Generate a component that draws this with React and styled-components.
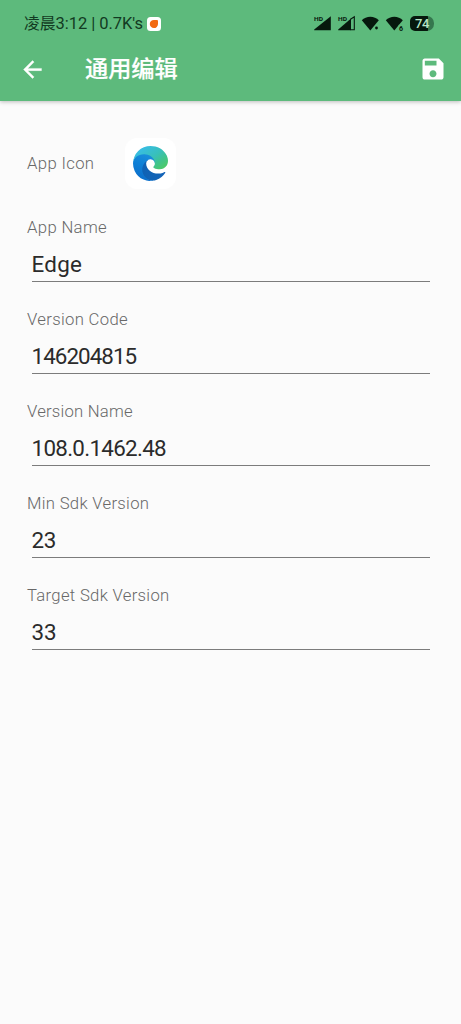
import React from 'react';
import styled, { createGlobalStyle } from 'styled-components';

const fields = [
  { label: 'App Name', value: 'Edge', labelGap: 0.35, gap: 0.25 },
  { label: 'Version Code', value: '146204815', labelGap: 0.32, gap: -0.95 },
  { label: 'Version Name', value: '108.0.1462.48', labelGap: 0.22, gap: -0.7 },
  { label: 'Min Sdk Version', value: '23', labelGap: 0.3, gap: -0.4 },
  { label: 'Target Sdk Version', value: '33', labelGap: 0.3, gap: -0.1 },
];

const StatusIcons = () => (
  <svg width="120" height="20" viewBox="0 0 120 20">
    <g fill="#06180d">
      <path d="M16.8 2.3V16.3H0.2V15.4Z" />
      <path d="M24.2 16.3V15.4L37 4.4V16.3Z" />
      <path d="M36.5 5.2L40.3 2.8V15.8H36.5" fill="none" stroke="#06180d" strokeWidth="1.1" />
      <path d="M47.8 6.3C52 1.6 60.6 1.6 64.8 6.3L56.3 16.5Z" />
      <path d="M71.8 6.3C76 1.6 84.6 1.6 88.8 6.3L80.3 16.5Z" />
    </g>
    <circle cx="62.5" cy="14" r="2.6" fill="#5dba7c" />
    <circle cx="62.5" cy="14" r="1.4" fill="#06180d" />
    <path d="M0 1.6H9.4V7.2H0ZM24 1.6H33.4V7.2H24Z" fill="#5dba7c" />
    <rect x="84.6" y="10.8" width="5" height="7" fill="#5dba7c" />
    <g fill="#06180d" fontFamily="Roboto, sans-serif" fontWeight="700">
      <text x="0" y="6.8" fontSize="5.8" textLength="9" lengthAdjust="spacingAndGlyphs">HD</text>
      <text x="24" y="6.8" fontSize="5.8" textLength="9" lengthAdjust="spacingAndGlyphs">HD</text>
      <text x="85" y="17.3" fontSize="7">6</text>
    </g>
  </svg>
);

const EdgeLogo = () => (
  <svg width="35" height="35" viewBox="0 0 256 256">
    <defs>
      <linearGradient id="deep" x1="63" y1="178" x2="242" y2="178" gradientUnits="userSpaceOnUse">
        <stop offset="0" stopColor="#0f62b4" />
        <stop offset="1" stopColor="#1464b8" />
      </linearGradient>
      <linearGradient id="mid" x1="125" y1="60" x2="60" y2="240" gradientUnits="userSpaceOnUse">
        <stop offset="0" stopColor="#1b90dc" />
        <stop offset="0.5" stopColor="#0f80d6" />
        <stop offset="1" stopColor="#0c70cc" />
      </linearGradient>
      <linearGradient id="top" x1="70" y1="30" x2="190" y2="190" gradientUnits="userSpaceOnUse">
        <stop offset="0" stopColor="#38bde0" />
        <stop offset="0.45" stopColor="#38c0bb" />
        <stop offset="0.75" stopColor="#40c48c" />
        <stop offset="1" stopColor="#4cc96c" />
      </linearGradient>
    </defs>
    <g transform="translate(-4.63 -4.92)">
      <path fill="url(#deep)" d="M235.68 195.5a93.73 93.73 0 0 1-10.54 4.71 101.87 101.87 0 0 1-35.9 6.46c-47.32 0-88.54-32.55-88.54-74.32A31.48 31.48 0 0 1 117.13 105c-42.8 1.8-53.8 46.4-53.8 72.53 0 73.88 68.09 81.37 82.76 81.37 7.91 0 19.84-2.3 27-4.56l1.31-.44a128.34 128.34 0 0 0 66.6-52.8 4 4 0 0 0-5.32-5.6Z" />
      <path fill="url(#mid)" d="M110.34 246.34A79.2 79.2 0 0 1 87.6 225a80.72 80.72 0 0 1 29.53-120c3.12-1.47 8.45-4.13 15.54-4a32.35 32.35 0 0 1 25.69 13 31.88 31.88 0 0 1 6.36 18.66c0-.21 24.46-79.6-80-79.6-43.9 0-80 41.66-80 78.21a130.15 130.15 0 0 0 12.11 56 128 128 0 0 0 156.38 67.11 75.55 75.55 0 0 1-62.78-8Z" />
      <path fill="url(#top)" d="M156.94 153.78c-.81 1.05-3.3 2.5-3.3 5.66 0 2.61 1.7 5.12 4.72 7.23 14.38 10 41.49 8.68 41.56 8.68a59.56 59.56 0 0 0 30.27-8.35 61.38 61.38 0 0 0 30.43-52.88c.26-22.41-8-37.31-11.34-43.91C228.09 28.76 182.35 4.92 132.61 4.92a128 128 0 0 0-128 126.2c.48-36.54 36.8-66.05 80-66.05 3.5 0 23.46.34 42 10.07 16.34 8.58 24.9 18.94 30.85 29.21 6.18 10.67 7.28 24.15 7.28 29.52s-2.74 13.33-7.8 19.91Z" />
    </g>
  </svg>
);

const App = () => {
  return (
    <>
      <GlobalStyle />
      <Screen>
        <Header>
          <StatusBar>
            <Clock>
              凌晨<ClockLatin>3:12 | 0.7K's</ClockLatin>
            </Clock>
            <Notification>
              <svg width="14" height="14" viewBox="0 0 14 14">
                <path d="M7 2.9H10A1 1 0 0 1 11 3.9V7A4.1 4.1 0 1 1 7 2.9Z" fill="#f26a12" />
              </svg>
            </Notification>
            <StatusRight>
              <StatusIcons />
              <Battery>74</Battery>
            </StatusRight>
          </StatusBar>
          <Toolbar>
            <IconButton aria-label="Back">
              <svg width="27" height="27" viewBox="0 0 24 24" fill="#fff" stroke="#fff" strokeWidth="0.3">
                <path d="M20 11H7.83l5.59-5.59L12 4l-8 8 8 8 1.41-1.41L7.83 13H20v-2z" />
              </svg>
            </IconButton>
            <Title>通用编辑</Title>
            <IconButton aria-label="Save">
              <svg width="28" height="28" viewBox="0 0 24 24" fill="#fff">
                <path d="M17 3H5c-1.11 0-2 .9-2 2v14c0 1.1.89 2 2 2h14c1.1 0 2-.9 2-2V7l-4-4zm-5 16c-1.66 0-3-1.34-3-3s1.34-3 3-3 3 1.34 3 3-1.34 3-3 3zm3-10H5V5h10v4z" />
              </svg>
            </IconButton>
          </Toolbar>
        </Header>

        <Form>
          <IconRow>
            <Label $gap={0.35}>App Icon</Label>
            <AppIcon>
              <EdgeLogo />
            </AppIcon>
          </IconRow>
          {fields.map((field) => (
            <Field key={field.label}>
              <Label $gap={field.labelGap}>{field.label}</Label>
              <Input defaultValue={field.value} $gap={field.gap} />
            </Field>
          ))}
        </Form>
      </Screen>
    </>
  );
};

const GlobalStyle = createGlobalStyle`
  * {
    box-sizing: border-box;
  }
  body {
    margin: 0;
    background: #fbfbfb;
    font-family: Roboto, "Noto Sans CJK SC", sans-serif;
  }
  svg {
    display: block;
  }
`;

const Screen = styled.div`
  min-height: 1024px;
  background: #fbfbfb;
`;

const Header = styled.header`
  height: 101px;
  background: #5dba7c;
  box-shadow: 0 1px 4px rgba(0, 0, 0, 0.25);
`;

const StatusBar = styled.div`
  display: flex;
  align-items: center;
  height: 46px;
  padding: 1px 27px 0 24px;
`;

const Clock = styled.div`
  font-size: 15.8px;
  line-height: 20px;
  color: #123a22;
  white-space: nowrap;
`;

const ClockLatin = styled.span`
  font-size: 16.5px;
  letter-spacing: -0.05px;
`;

const Notification = styled.div`
  width: 14px;
  height: 14px;
  margin-left: 3.5px;
  border-radius: 3.5px;
  background: #fff;
`;

const StatusRight = styled.div`
  display: flex;
  align-items: center;
  margin-left: auto;
`;

const Battery = styled.div`
  width: 24px;
  height: 15px;
  margin-left: -24px;
  border-radius: 5px 7px 7px 5px;
  background: linear-gradient(90deg, #06180d 75%, #35774e 75%);
  color: #b9e5c6;
  font-size: 13px;
  font-weight: 500;
  letter-spacing: -0.5px;
  line-height: 16px;
  text-align: center;
`;

const Toolbar = styled.div`
  display: flex;
  align-items: center;
  height: 46px;
  padding: 0 14px 0 19px;
`;

const IconButton = styled.button`
  padding: 0;
  border: none;
  background: none;
  cursor: pointer;
`;

const Title = styled.h1`
  flex: 1;
  margin: 0 0 0 39px;
  font-size: 23.2px;
  font-weight: 500;
  line-height: 30px;
  color: #fff;
  -webkit-text-stroke: 0.2px #fff;
`;

const Form = styled.main`
  padding: 37px 27px 0;
`;

const IconRow = styled.div`
  display: flex;
  align-items: center;
  height: 51px;
  margin-bottom: 29px;
`;

const AppIcon = styled.div`
  display: flex;
  align-items: center;
  justify-content: center;
  width: 51px;
  height: 51px;
  margin-left: 31px;
  border-radius: 12px;
  background: #fff;
`;

const Field = styled.div`
  height: 92.1px;
`;

const Label = styled.div`
  font-size: 16.7px;
  font-weight: 300;
  line-height: 20px;
  letter-spacing: ${(props) => props.$gap}px;
  color: #686868;
  white-space: nowrap;
`;

const Input = styled.input`
  display: block;
  width: 398px;
  height: 33px;
  margin: 11px 0 0 4.5px;
  padding: 0 0 3px;
  border: none;
  border-bottom: 1px solid #7c7c7c;
  outline: none;
  background: none;
  font-family: inherit;
  font-size: 22.4px;
  letter-spacing: ${(props) => props.$gap}px;
  color: #2b2b2b;
`;

export default App;
